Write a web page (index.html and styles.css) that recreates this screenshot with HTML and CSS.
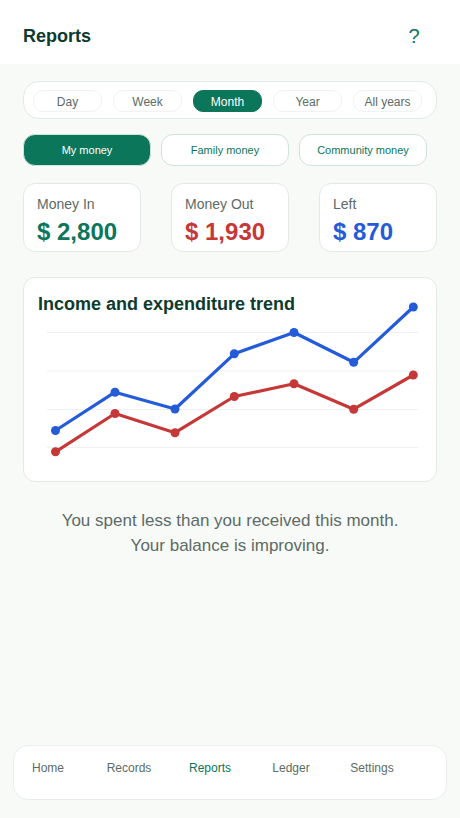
FILE: index.html
```
<!DOCTYPE html>
<html lang="en">
<head>
    <meta charset="UTF-8">
    <meta name="viewport" content="width=device-width, initial-scale=1.0">
    <title>Reports</title>
    <link rel="stylesheet" href="styles.css">
</head>
<body>
    <header class="topbar">
        <h1 class="topbar-title">Reports</h1>
        <button class="help-btn" type="button">?</button>
    </header>

    <main class="content">
        <div class="period">
            <button class="period-btn" type="button">Day</button>
            <button class="period-btn" type="button">Week</button>
            <button class="period-btn active" type="button">Month</button>
            <button class="period-btn" type="button">Year</button>
            <button class="period-btn" type="button">All years</button>
        </div>

        <div class="scope">
            <button class="scope-btn active" type="button">My money</button>
            <button class="scope-btn" type="button">Family money</button>
            <button class="scope-btn" type="button">Community money</button>
        </div>

        <section class="totals">
            <div class="total">
                <div class="total-label">Money In</div>
                <div class="total-value in">$ 2,800</div>
            </div>
            <div class="total">
                <div class="total-label">Money Out</div>
                <div class="total-value out">$ 1,930</div>
            </div>
            <div class="total">
                <div class="total-label">Left</div>
                <div class="total-value left">$ 870</div>
            </div>
        </section>

        <section class="trend">
            <h2 class="trend-title">Income and expenditure trend</h2>
            <div class="trend-chart">
                <svg viewBox="0 0 371 141">
                    <g class="grid">
                        <path d="M0 12.5H371M0 51H371M0 89.5H371M0 127.5H371"/>
                    </g>
                    <g class="line income">
                        <polyline points="8.5,110.5 68,72.2 128,89 187.3,33.8 247,12.5 306.7,42.3 366.3,-13"/>
                        <circle cx="8.5" cy="110.5" r="4.5"/>
                        <circle cx="68" cy="72.2" r="4.5"/>
                        <circle cx="128" cy="89" r="4.5"/>
                        <circle cx="187.3" cy="33.8" r="4.5"/>
                        <circle cx="247" cy="12.5" r="4.5"/>
                        <circle cx="306.7" cy="42.3" r="4.5"/>
                        <circle cx="366.3" cy="-13" r="4.5"/>
                    </g>
                    <g class="line expense">
                        <polyline points="8.5,131.8 68,93.5 128,112.7 187.3,76.5 247,63.7 306.7,89.2 366.3,55"/>
                        <circle cx="8.5" cy="131.8" r="4.5"/>
                        <circle cx="68" cy="93.5" r="4.5"/>
                        <circle cx="128" cy="112.7" r="4.5"/>
                        <circle cx="187.3" cy="76.5" r="4.5"/>
                        <circle cx="247" cy="63.7" r="4.5"/>
                        <circle cx="306.7" cy="89.2" r="4.5"/>
                        <circle cx="366.3" cy="55" r="4.5"/>
                    </g>
                </svg>
            </div>
        </section>

        <p class="summary">You spent less than you received this month.<br>Your balance is improving.</p>
    </main>

    <nav class="tabs">
        <a class="tab" href="#home">Home</a>
        <a class="tab" href="#records">Records</a>
        <a class="tab active" href="#reports">Reports</a>
        <a class="tab" href="#ledger">Ledger</a>
        <a class="tab" href="#settings">Settings</a>
    </nav>
</body>
</html>
```

FILE: styles.css
```
* {
    box-sizing: border-box;
}

body {
    margin: 0;
    min-height: 100vh;
    display: flex;
    flex-direction: column;
    background: #f8faf8;
    font-family: "Liberation Sans", Arial, sans-serif;
    color: #5c6b66;
}

button {
    font-family: inherit;
    cursor: pointer;
}

.topbar {
    display: flex;
    align-items: center;
    justify-content: space-between;
    height: 64px;
    padding: 8px 36px 0 23px;
    background: #fff;
}

.topbar-title {
    margin: 0;
    font-size: 18px;
    line-height: 24px;
    color: #0d3b2e;
}

.help-btn {
    padding: 0;
    width: 20px;
    border: none;
    background: none;
    font-size: 20px;
    line-height: 24px;
    color: #0b765a;
}

.content {
    padding: 17px 23px;
}

.period {
    display: flex;
    gap: 11px;
    padding: 8px 14px 6px 9px;
    background: #fff;
    border: 1px solid #e2e9e6;
    border-radius: 16px;
}

.period-btn {
    flex: 1 1 0;
    min-width: 0;
    height: 22px;
    padding: 2px 0 0;
    background: #fff;
    border: 1px solid #f0f3f2;
    border-radius: 10px;
    font-size: 12px;
    line-height: 18px;
    color: #5c6b66;
    white-space: nowrap;
}

.period-btn.active {
    background: #0b765a;
    border-color: #0b765a;
    color: #fff;
}

.scope {
    display: flex;
    gap: 10px;
    margin-top: 15px;
    padding-right: 10px;
}

.scope-btn {
    flex: 1 1 0;
    height: 32px;
    padding: 0;
    background: #fff;
    border: 1px solid #cfe2db;
    border-radius: 12px;
    font-size: 11px;
    color: #0b765a;
    white-space: nowrap;
}

.scope-btn.active {
    background: #0b765a;
    color: #fff;
}

.totals {
    display: grid;
    grid-template-columns: repeat(3, 1fr);
    gap: 30px;
    margin-top: 17px;
}

.total {
    padding: 10px 0 1px 13px;
    background: #fff;
    border: 1px solid #e2e9e6;
    border-radius: 12px;
    white-space: nowrap;
}

.total-label {
    font-size: 14px;
    line-height: 20px;
}

.total-value {
    font-size: 24px;
    font-weight: bold;
    line-height: 36px;
}

.in {
    color: #0b765a;
}

.out {
    color: #c63838;
}

.left {
    color: #245bd8;
}

.trend {
    margin-top: 25px;
    padding: 14px 18px 20px 14px;
    background: #fff;
    border: 1px solid #e2e9e6;
    border-radius: 12px;
}

.trend-title {
    margin: 0;
    font-size: 18px;
    line-height: 24px;
    color: #0d3b2e;
}

.trend-chart {
    margin: 4px 0 0 9px;
}

/* the last income point rises above the plot area */
.trend-chart svg {
    display: block;
    width: 100%;
    overflow: visible;
}

.grid {
    stroke: #eef1f0;
    stroke-width: 1;
}

.line polyline {
    fill: none;
    stroke-width: 3.2;
    stroke-linejoin: round;
}

.income {
    stroke: #245bd8;
    fill: #245bd8;
}

.expense {
    stroke: #c63838;
    fill: #c63838;
}

.line circle {
    stroke: none;
}

.summary {
    margin: 26px 0 0;
    font-size: 17px;
    line-height: 25px;
    text-align: center;
}

.tabs {
    display: flex;
    gap: 13px;
    margin: auto 13px 18px;
    padding: 14px 40px 23px 0;
    background: #fff;
    border: 1px solid #e8edeb;
    border-radius: 15px;
}

.tab {
    flex: 1 1 0;
    font-size: 12px;
    line-height: 16px;
    text-align: center;
    text-decoration: none;
    color: #5c6b66;
}

.tab.active {
    color: #0b765a;
}
```
